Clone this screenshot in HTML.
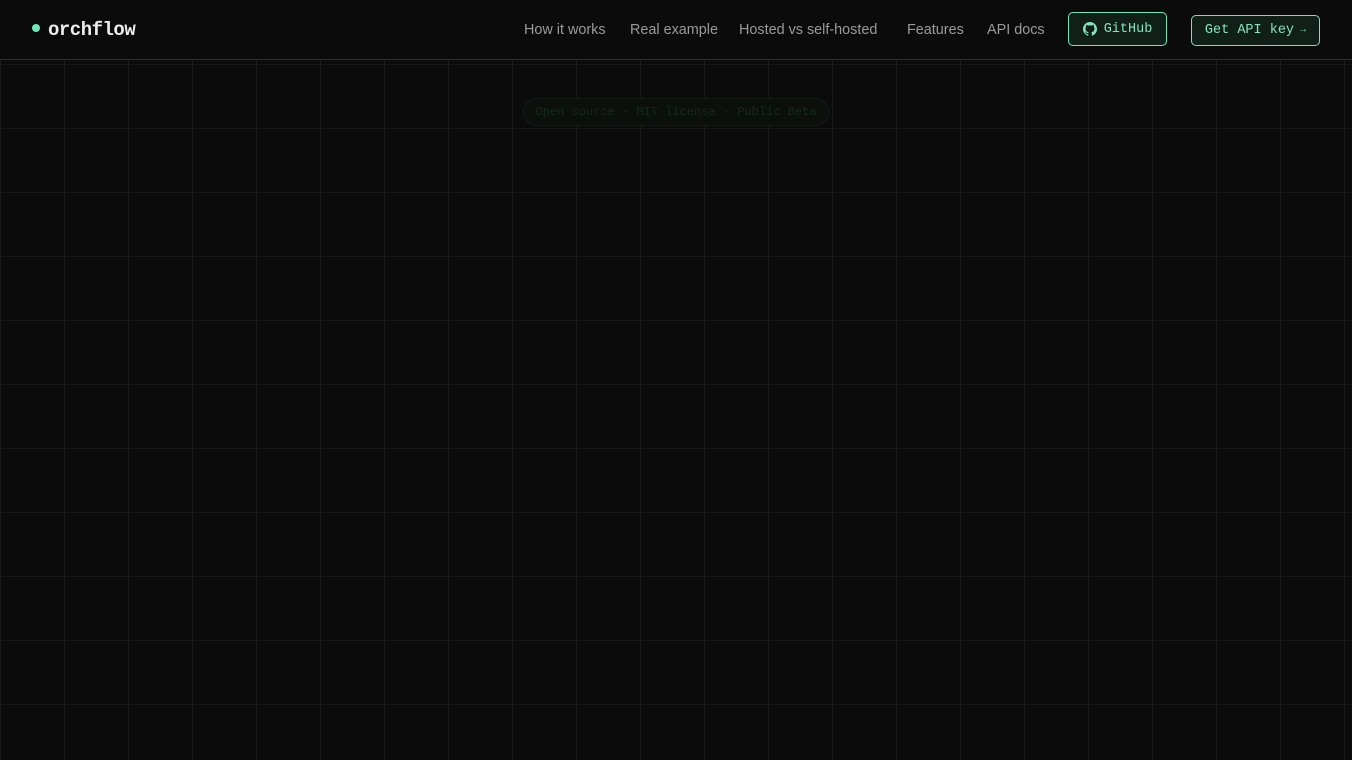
<!DOCTYPE html>
<html><head><meta charset="utf-8"><style>
*{margin:0;padding:0;box-sizing:border-box}
html,body{width:1352px;height:760px;overflow:hidden;background:#0b0b0b}
body{position:relative;font-family:"Liberation Sans",sans-serif;
background-image:linear-gradient(to right,#181818 1px,transparent 1px),linear-gradient(to bottom,#181818 1px,transparent 1px);
background-size:64px 64px;background-position:0 0}
header{position:absolute;left:0;top:0;width:1352px;height:60px;background:#0b0b0b;border-bottom:1px solid #2e2e2e}
.logo{position:absolute;left:32px;top:19px;font-family:"Liberation Mono",monospace;font-weight:bold;font-size:19px;color:#eee;letter-spacing:-0.5px}
.logo .dot{display:inline-block;width:8px;height:8px;border-radius:50%;background:#6ee7b7;margin-right:8px;vertical-align:3px}
nav a{position:absolute;top:22px;font-size:14.4px;color:#9a9a9a;text-decoration:none;white-space:nowrap}
.btn{position:absolute;border:1px solid #6ee7b7;border-radius:5px;background:#102019;color:#86e3bd;font-family:"Liberation Mono",monospace;font-size:13.5px;display:flex;align-items:center;justify-content:center}
.badge{position:absolute;left:523px;top:98px;width:306px;height:28px;border:1px solid #121d16;border-radius:14px;background:#0c100d;color:#142a1d;font-family:"Liberation Mono",monospace;font-size:12px;display:flex;align-items:center;justify-content:center}
</style></head><body>
<header>
<div class="logo"><span class="dot"></span>orchflow</div>
<nav>
<a style="left:524px">How it works</a>
<a style="left:630px">Real example</a>
<a style="left:739px">Hosted vs self-hosted</a>
<a style="left:907px">Features</a>
<a style="left:987px">API docs</a>
</nav>
<div class="btn" style="left:1068px;top:12px;width:99px;height:34px">
<svg width="14" height="14" viewBox="0 0 16 16" style="margin-right:7px"><path fill="#86e3bd" d="M8 0C3.6 0 0 3.6 0 8c0 3.5 2.3 6.5 5.5 7.6.4.1.5-.2.5-.4v-1.4c-2.2.5-2.7-1-2.7-1-.4-.9-.9-1.200-.9-1.200-.7-.5.1-.5.1-.5.8.1 1.2.8 1.2.8.7 1.200 1.9.9 2.300.7.1-.5.3-.9.5-1.100-1.800-.2-3.600-.9-3.600-4 0-.9.3-1.600.8-2.100-.1-.2-.4-1 .1-2.100 0 0 .7-.2 2.200.8.6-.2 1.300-.3 2-.3s1.400.1 2 .3c1.500-1 2.200-.8 2.200-.8.4 1.100.2 1.900.1 2.100.5.6.8 1.300.8 2.100 0 3.100-1.900 3.800-3.600 4 .3.3.6.8.6 1.500v2.200c0 .2.1.5.6.4C13.700 14.500 16 11.500 16 8c0-4.400-3.600-8-8-8z"/></svg>GitHub</div>
<div class="btn" style="left:1191px;top:15px;width:129px;height:31px">Get API key <span style="font-size:10px;margin-left:6px">→</span></div>
</header>
<div class="badge">Open source · MIT license · Public Beta</div>
</body></html>
